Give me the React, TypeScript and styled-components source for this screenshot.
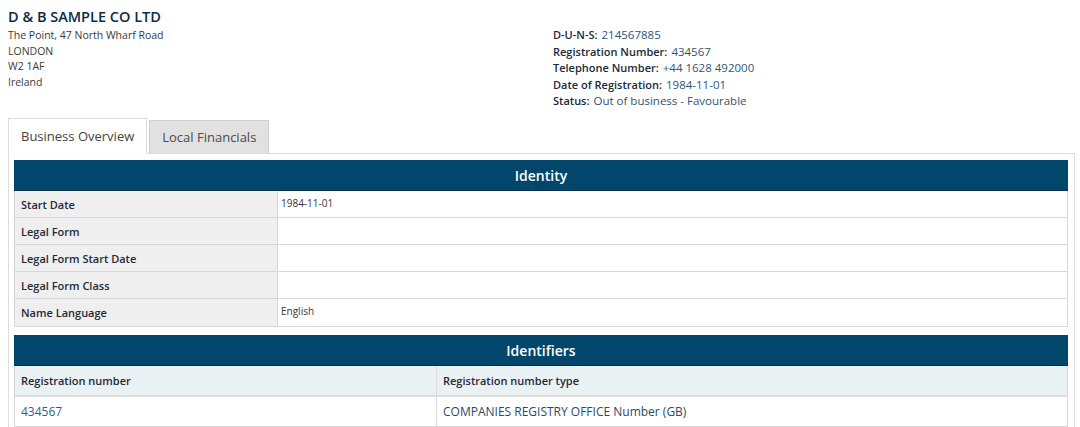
import styled, { createGlobalStyle } from "styled-components";

const GlobalStyle = createGlobalStyle`
  body {
    margin: 0;
    background: #ffffff;
    font-family: "Open Sans", "Liberation Sans", sans-serif;
    color: #333333;
  }
`;

const companyDetails = [
  { label: "D-U-N-S:", value: "214567885" },
  { label: "Registration Number:", value: "434567" },
  { label: "Telephone Number:", value: "+44 1628 492000" },
  { label: "Date of Registration:", value: "1984-11-01" },
  { label: "Status:", value: "Out of business - Favourable" },
];

const identityRows = [
  { label: "Start Date", value: "1984-11-01" },
  { label: "Legal Form", value: "" },
  { label: "Legal Form Start Date", value: "" },
  { label: "Legal Form Class", value: "" },
  { label: "Name Language", value: "English" },
];

export default function App() {
  return (
    <>
      <GlobalStyle />
      <Page>
        <Header>
          <Address>
            <CompanyName>D &amp; B SAMPLE CO LTD</CompanyName>
            <AddressLine>The Point, 47 North Wharf Road</AddressLine>
            <AddressLine>LONDON</AddressLine>
            <AddressLine>W2 1AF</AddressLine>
            <AddressLine>Ireland</AddressLine>
          </Address>
          <Details>
            {companyDetails.map((d) => (
              <DetailLine key={d.label}>
                <DetailLabel>{d.label}</DetailLabel>
                <DetailValue>{d.value}</DetailValue>
              </DetailLine>
            ))}
          </Details>
        </Header>

        <Tabs>
          <Tab active>Business Overview</Tab>
          <Tab>Local Financials</Tab>
        </Tabs>

        <Panel>
          <Table>
            <TableTitle>Identity</TableTitle>
            {identityRows.map((r) => (
              <IdentityRow key={r.label}>
                <LabelCell>{r.label}</LabelCell>
                <ValueCell>{r.value}</ValueCell>
              </IdentityRow>
            ))}
          </Table>

          <Table>
            <TableTitle>Identifiers</TableTitle>
            <IdRow head>
              <IdCell head>Registration number</IdCell>
              <IdCell head>Registration number type</IdCell>
            </IdRow>
            <IdRow>
              <IdCell link>434567</IdCell>
              <IdCell>COMPANIES REGISTRY OFFICE Number (GB)</IdCell>
            </IdRow>
          </Table>
        </Panel>
      </Page>
    </>
  );
}

const Page = styled.div`
  padding: 6px 5px 0 8px;
`;

const Header = styled.div`
  display: flex;
  height: 112px;
`;

const Address = styled.div`
  width: 545px;
`;

const CompanyName = styled.h1`
  margin: 0;
  font-size: 14.5px;
  line-height: 22px;
  font-weight: 600;
  color: #0b2c45;
`;

const AddressLine = styled.div`
  font-size: 10.5px;
  line-height: 15.5px;
  color: #3a3a3a;
`;

const Details = styled.div`
  padding-top: 21px;
`;

const DetailLine = styled.div`
  font-size: 11px;
  line-height: 16.5px;
`;

const DetailLabel = styled.span`
  font-weight: 600;
  color: #1b2a38;
  margin-right: 4px;
`;

const DetailValue = styled.span`
  font-size: 11.5px;
  color: #2f5575;
`;

const Tabs = styled.div`
  display: flex;
  align-items: flex-end;
  gap: 2px;
  height: 35px;
`;

const Tab = styled.div<{ active?: boolean }>`
  height: ${(p) => (p.active ? "36px" : "34px")};
  box-sizing: border-box;
  padding: 0 12px;
  display: flex;
  align-items: center;
  white-space: nowrap;
  font-size: 13px;
  color: ${(p) => (p.active ? "#444444" : "#4a4a4a")};
  background: ${(p) => (p.active ? "#ffffff" : "#e1e1e1")};
  border: 1px solid ${(p) => (p.active ? "#dddddd" : "#cfcfcf")};
  border-bottom: ${(p) => (p.active ? "1px solid #ffffff" : "1px solid #dddddd")};
  margin-bottom: -1px;
  position: relative;
  z-index: 1;
`;

const Panel = styled.div`
  border: 1px solid #dddddd;
  padding: 6px 6px 0 5px;
  display: flex;
  flex-direction: column;
  gap: 8px;
  width: 1067px;
  box-sizing: border-box;
`;

const Table = styled.div`
  border: 1px solid #d8d8d8;
  border-top: none;
`;

const TableTitle = styled.div`
  background: #03466b;
  color: #ffffff;
  font-size: 14px;
  font-weight: 600;
  text-align: center;
  height: 31px;
  line-height: 31px;
  margin: 0 -1px;
  box-shadow: inset 0 -1px 0 #01304b;
`;

const IdentityRow = styled.div`
  display: grid;
  grid-template-columns: 263px 1fr;
  height: 27px;
  box-sizing: border-box;
  border-bottom: 1px solid #d6d6d6;
  &:last-child {
    border-bottom: none;
  }
`;

const LabelCell = styled.div`
  background: #efefef;
  border-right: 1px solid #d6d6d6;
  padding-left: 6px;
  display: flex;
  align-items: center;
  font-size: 11px;
  font-weight: 600;
  color: #1f2a36;
`;

const ValueCell = styled.div`
  padding: 5px 3px 0;
  font-size: 10px;
  color: #3a3440;
`;

const IdRow = styled.div<{ head?: boolean }>`
  display: grid;
  grid-template-columns: 421px 1fr;
  height: ${(p) => (p.head ? "31px" : "29px")};
  box-sizing: border-box;
  background: ${(p) => (p.head ? "#e9f1f3" : "#ffffff")};
  border-bottom: ${(p) => (p.head ? "2px solid #dddddd" : "none")};
`;

const IdCell = styled.div<{ head?: boolean; link?: boolean }>`
  display: flex;
  align-items: center;
  padding-left: 6px;
  font-size: ${(p) => (p.head ? "11px" : "12px")};
  font-weight: ${(p) => (p.head ? 600 : 400)};
  color: ${(p) => (p.head ? "#1f2a36" : p.link ? "#2a5f8a" : "#2c4a66")};
  & + & {
    border-left: 1px solid #dddddd;
  }
`;
